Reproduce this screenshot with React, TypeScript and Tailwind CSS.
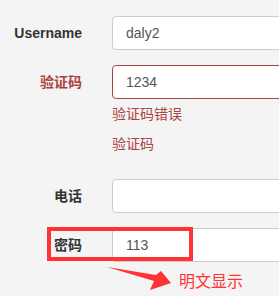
import React from 'react';

const font = { fontFamily: '"Liberation Sans", "Noto Sans CJK SC", sans-serif' };

const Row: React.FC<{ label: string; error?: boolean; value?: string; children?: React.ReactNode; className?: string }> = ({
  label,
  error,
  value,
  children,
  className,
}) => {
  return (
    <div className={`flex ${className ?? ''}`}>
      <div
        className={`w-[82px] shrink-0 h-[34px] flex items-center justify-end text-[14px] font-bold ${
          error ? 'text-[#a94442]' : 'text-[#333]'
        }`}
      >
        {label}
      </div>
      <div className="ml-[30px] w-[220px] shrink-0">
        <div
          className={`h-[34px] rounded-[4px] border bg-white px-[13px] flex items-center text-[14px] text-[#555] ${
            error ? 'border-[#a94442]' : 'border-[#ccc]'
          }`}
        >
          {value}
        </div>
        {children}
      </div>
    </div>
  );
};

const App: React.FC = () => {
  return (
    <div className="relative w-[279px] h-[296px] overflow-hidden bg-[#f4f4f4]" style={font}>
      <form className="pt-[16px]">
        <Row label="Username" value="daly2" />
        <Row label="验证码" value="1234" error className="mt-[15px]">
          <p className="mt-[5px] leading-[20px] text-[14px] text-[#a94442]">验证码错误</p>
          <p className="mt-[10px] leading-[20px] text-[14px] text-[#a94442]">验证码</p>
        </Row>
        <Row label="电话" className="mt-[25px]" />
        <Row label="密码" value="113" className="mt-[15px]" />
      </form>

      {/* annotation */}
      <div className="absolute left-[47px] top-[227px] w-[146px] h-[34px] border-[4px] border-[#f33]" />
      <svg className="absolute left-0 top-0" width="279" height="296">
        <polygon points="107,267 156,275 161,271 171,283 150,290 154,281" fill="#f33" />
      </svg>
      <span className="absolute left-[179px] top-[271px] text-[16px] leading-[22px] text-[#f33]">明文显示</span>
    </div>
  );
};

export default App;
